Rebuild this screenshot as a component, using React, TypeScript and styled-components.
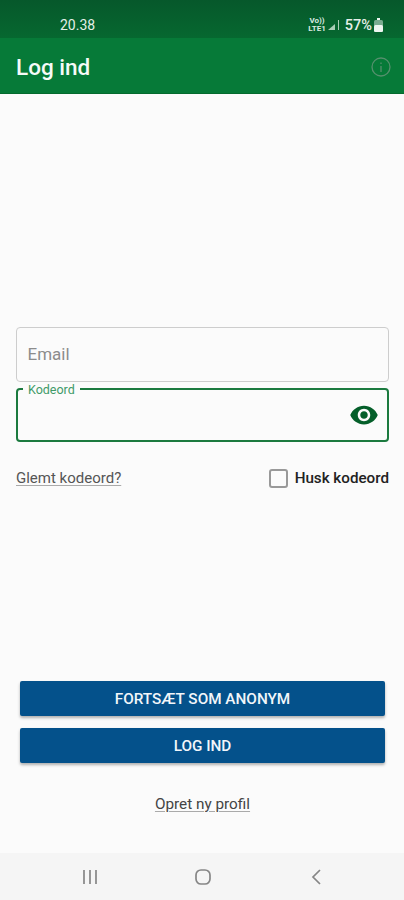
import styled, { createGlobalStyle } from 'styled-components';
import { MdVisibility } from 'react-icons/md';

const GlobalStyle = createGlobalStyle`
  html, body {
    margin: 0;
    padding: 0;
    background: #fbfbfb;
    font-family: Roboto, "Liberation Sans", sans-serif;
  }
`;

const Screen = styled.div`
  width: 404px;
  height: 900px;
  display: flex;
  flex-direction: column;
  overflow: hidden;
  background: #fbfbfb;
`;

const StatusBar = styled.div`
  height: 38px;
  flex: none;
  display: flex;
  align-items: center;
  justify-content: space-between;
  padding: 12px 21px 0 60px;
  box-sizing: border-box;
  background: linear-gradient(#06582b, #066830);
  color: #e4efe8;
  font-size: 14px;
`;

const StatusRight = styled.div`
  display: flex;
  align-items: center;
  gap: 2px;
`;

const NetworkLabel = styled.span`
  display: flex;
  flex-direction: column;
  align-items: center;
  font-size: 8px;
  font-weight: 700;
  line-height: 8px;
  color: #dcebe2;
`;

const Percent = styled.span`
  font-size: 14.5px;
  font-weight: 500;
  margin-left: 3px;
`;

const AppBar = styled.header`
  height: 56px;
  flex: none;
  display: flex;
  align-items: center;
  justify-content: space-between;
  padding: 2px 13px 0 16px;
  box-sizing: border-box;
  background: #067a38;
  border-bottom: 1px solid #056a2e;
`;

const Title = styled.h1`
  margin: 0;
  color: #f6fbf8;
  font-size: 22.5px;
  font-weight: 500;
`;

const Form = styled.main`
  flex: none;
  height: 759px;
  box-sizing: border-box;
  display: flex;
  flex-direction: column;
  padding-top: 233px;
`;

const Field = styled.div<{ $focused?: boolean }>`
  position: relative;
  height: ${({ $focused }) => ($focused ? '54px' : '55px')};
  margin: 0 15px 6px 16px;
  padding: ${({ $focused }) => ($focused ? '0 10px' : '0 10px 2px 10.5px')};
  box-sizing: border-box;
  display: flex;
  align-items: center;
  justify-content: space-between;
  border-radius: 4px;
  border: ${({ $focused }) => ($focused ? '2px solid #1b7a3f' : '1.5px solid #cdcdcd')};
  background: #fbfbfb;
`;

const Placeholder = styled.span`
  color: #8c8c8c;
  font-size: 17px;
`;

const FloatLabel = styled.label`
  position: absolute;
  left: 5px;
  top: -7px;
  padding: 0 5px;
  background: #fbfbfb;
  color: #3f9a68;
  font-size: 12.5px;
  line-height: 14px;
`;

const Eye = styled(MdVisibility)`
  color: #055f2a;
  font-size: 30px;
  margin-right: -2px;
`;

const Options = styled.div`
  display: flex;
  align-items: center;
  justify-content: space-between;
  margin: 18px 15px 0 16px;
  height: 24px;
`;

const TextLink = styled.a`
  color: #555;
  font-size: 15px;
  text-decoration: underline;
  text-decoration-color: #aaa;
  text-underline-offset: 2px;
`;

const Remember = styled.div`
  display: flex;
  align-items: center;
  gap: 7px;
`;

const Box = styled.span`
  width: 15px;
  height: 15px;
  border: 2px solid #999;
  border-radius: 3px;
`;

const RememberText = styled.span`
  color: #222;
  font-size: 15.2px;
  font-weight: 500;
`;

const Actions = styled.div`
  margin-top: auto;
  padding: 0 19px 40px 20px;
  display: flex;
  flex-direction: column;
  gap: 12px;
`;

const Button = styled.button`
  height: 35px;
  border: 0;
  border-radius: 2px;
  background: #04518b;
  color: #f2f6fa;
  font-family: inherit;
  font-size: 15.3px;
  font-weight: 500;
  box-shadow: 0 2px 3px rgba(0, 0, 0, 0.3);
`;

const CreateProfile = styled(TextLink)`
  align-self: center;
  margin-top: 20px;
  font-size: 15.3px;
  color: #444;
`;

const NavBar = styled.nav`
  height: 47px;
  flex: none;
  display: grid;
  grid-template-columns: 180px 46px 1fr;
  align-items: center;
  background: #f5f5f5;
`;

const NavItem = styled.svg<{ $x: number }>`
  justify-self: start;
  margin-left: ${({ $x }) => $x}px;
  fill: none;
  stroke: #868686;
  stroke-width: 1.7;
`;

function App() {
  return (
    <Screen>
      <GlobalStyle />

      <StatusBar>
        <span>20.38</span>
        <StatusRight>
          <NetworkLabel>
            <span>Vo))</span>
            <span>LTE1</span>
          </NetworkLabel>
          <svg width="12" height="12" viewBox="0 0 12 12" fill="#a9cdb7">
            <path d="M0 11 L7 5 V11 Z" />
            <rect x="10" y="1" width="1" height="10" />
          </svg>
          <Percent>57%</Percent>
          <svg width="9" height="14" viewBox="0 0 9 14" fill="#eef6f1">
            <rect x="3" y="0" width="3" height="2" />
            <rect x="0" y="2" width="9" height="12" rx="1.5" opacity="0.5" />
            <rect x="0" y="7" width="9" height="7" rx="1.5" />
          </svg>
        </StatusRight>
      </StatusBar>

      <AppBar>
        <Title>Log ind</Title>
        <svg width="20" height="20" viewBox="0 0 20 20" fill="none" stroke="#55906d" strokeWidth="1.3">
          <circle cx="10" cy="10" r="9" />
          <path d="M10 9 V15 M10 5.5 V7" />
        </svg>
      </AppBar>

      <Form>
        <Field>
          <Placeholder>Email</Placeholder>
        </Field>
        <Field $focused>
          <FloatLabel>Kodeord</FloatLabel>
          <span />
          <Eye />
        </Field>

        <Options>
          <TextLink>Glemt kodeord?</TextLink>
          <Remember>
            <Box />
            <RememberText>Husk kodeord</RememberText>
          </Remember>
        </Options>

        <Actions>
          <Button>FORTSÆT SOM ANONYM</Button>
          <Button>LOG IND</Button>
          <CreateProfile>Opret ny profil</CreateProfile>
        </Actions>
      </Form>

      <NavBar>
        <NavItem $x={82} width="16" height="16" viewBox="0 0 16 16">
          <path d="M2 1 V15 M8 1 V15 M14 1 V15" />
        </NavItem>
        <NavItem $x={14} width="18" height="18" viewBox="0 0 18 18">
          <rect x="2" y="2" width="14" height="14" rx="5" />
        </NavItem>
        <NavItem $x={84} width="12" height="16" viewBox="0 0 12 16">
          <path d="M10 1 L3 8 L10 15" />
        </NavItem>
      </NavBar>
    </Screen>
  );
}

export default App;
